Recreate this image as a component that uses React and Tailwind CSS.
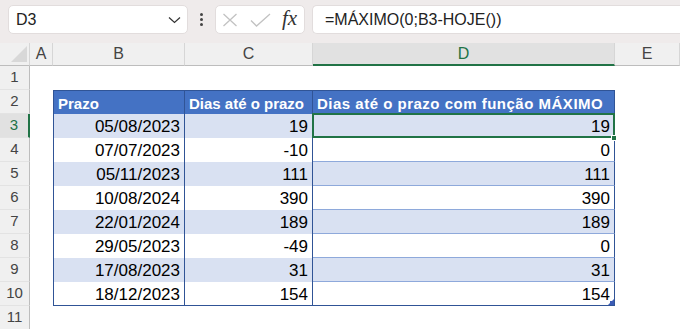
import React from 'react';

const rows = [
  ['05/08/2023', '19', '19'],
  ['07/07/2023', '-10', '0'],
  ['05/11/2023', '111', '111'],
  ['10/08/2024', '390', '390'],
  ['22/01/2024', '189', '189'],
  ['29/05/2023', '-49', '0'],
  ['17/08/2023', '31', '31'],
  ['18/12/2023', '154', '154'],
];

const TopBar = () => (
  <div className="h-[43px] bg-[#efebeb] flex items-start pt-[5px] pl-[8px]">
    {/* Name box */}
    <div className="w-[180px] h-[29px] bg-white rounded-[5px] border border-[#e2dddd] flex items-center justify-between pl-[7px] pr-[6px]">
      <span className="text-[16px] text-[#222]">D3</span>
      <svg width="13" height="8" viewBox="0 0 13 8">
        <path d="M1 1.5 L6.5 6.5 L12 1.5" fill="none" stroke="#333" strokeWidth="1.2" />
      </svg>
    </div>

    {/* vertical dots */}
    <div className="w-[27px] h-[29px] flex flex-col items-center justify-center gap-[2px]">
      <span className="w-[3px] h-[3px] bg-[#444] rounded-full" />
      <span className="w-[3px] h-[3px] bg-[#444] rounded-full" />
      <span className="w-[3px] h-[3px] bg-[#444] rounded-full" />
    </div>

    {/* cancel / enter / fx */}
    <div className="w-[90px] h-[29px] bg-white rounded-[5px] border border-[#e2dddd] flex items-center pl-[6px]">
      <svg width="16" height="14" viewBox="0 0 16 14">
        <path d="M1.5 1 L14.5 13 M14.5 1 L1.5 13" stroke="#c2c2c2" strokeWidth="1.3" fill="none" />
      </svg>
      <svg className="ml-[12px]" width="21" height="14" viewBox="0 0 21 14">
        <path d="M1 7.5 L6.5 13 L20 1" stroke="#c2c2c2" strokeWidth="1.3" fill="none" />
      </svg>
      <span className="ml-[11px] font-['Liberation_Serif',serif] italic text-[21px] leading-none text-[#333] -mt-[2px]">fx</span>
    </div>

    {/* formula */}
    <div className="ml-[7px] flex-1 h-[29px] bg-white rounded-l-[5px] border border-r-0 border-[#e2dddd] flex items-center pl-[12px] text-[16px] text-[#222]">
      =MÁXIMO(0;B3-HOJE())
    </div>
  </div>
);

const colHead = 'bg-[#f0f0f0] border-b border-b-[#bdbdbd] border-r border-r-[#d6d6d6] flex items-center justify-center text-[16px] leading-[22px] text-[#444]';
const rowHead = 'bg-[#f0f0f0] border-r border-r-[#bdbdbd] border-b border-b-[#e3e3e3] flex items-center justify-center text-[15px] text-[#444]';
const body = 'text-[17px] leading-[22px] pt-[2px] text-right pr-[4px] text-black whitespace-nowrap';
const head = 'bg-[#4472c4] text-white font-bold text-[15px] leading-[23px] pt-[1px] pl-[4px] whitespace-nowrap border-t border-t-[#305496] border-r border-r-[#305496]';

const Sheet = () => (
  <div className="grid grid-cols-[30px_23px_132px_128px_302px_1fr] grid-rows-[23px_repeat(11,24px)]">
    {/* column headers */}
    <div className="bg-[#f0f0f0] border-b border-b-[#bdbdbd] border-r border-r-[#d6d6d6] flex items-end justify-end pr-[2px] pb-[3px]">
      <svg width="16" height="16" viewBox="0 0 16 16">
        <polygon points="16,0 16,16 0,16" fill="#d8d8d8" />
      </svg>
    </div>
    <div className={colHead}>A</div>
    <div className={colHead}>B</div>
    <div className={colHead}>C</div>
    <div className="bg-[#e1e1e1] border-b-2 border-b-[#217346] border-r border-r-[#d6d6d6] flex items-center justify-center text-[16px] leading-[22px] text-[#217346]">D</div>
    <div className={colHead}>E</div>

    {/* row 1 */}
    <div className={rowHead}>1</div>
    <div />
    <div />
    <div />
    <div />
    <div />

    {/* row 2: table header */}
    <div className={rowHead}>2</div>
    <div />
    <div className={head + ' border-l border-l-[#305496]'}>Prazo</div>
    <div className={head}>Dias até o prazo</div>
    <div className={head + ' tracking-[0.5px]'}>Dias até o prazo com função MÁXIMO</div>
    <div />

    {rows.map((r, i) => {
      const n = i + 3;
      const band = i % 2 === 0 ? 'bg-[#d9e1f2]' : 'bg-white';
      const last = i === rows.length - 1;
      const bottom = last ? ' border-b border-b-[#305496]' : '';
      const selected = n === 3;
      return (
        <React.Fragment key={n}>
          {selected ? (
            <div className="bg-[#e1e1e1] border-r-2 border-r-[#217346] border-b border-b-[#e3e3e3] flex items-center justify-center text-[15px] text-[#217346]">{n}</div>
          ) : (
            <div className={rowHead}>{n}</div>
          )}
          <div />
          <div className={`${body} ${band} border-l border-l-[#305496] border-r border-r-[#305496]${bottom}`}>{r[0]}</div>
          <div className={`${body} ${band} border-r border-r-[#305496]${bottom}`}>{r[1]}</div>
          <div className={`${body} ${band} relative border-r border-r-[#305496] ${last ? 'border-b border-b-[#305496]' : 'border-b border-b-[#8ea9db]'}`}>
            {r[2]}
            {selected && (
              <>
                <div className="absolute -inset-[1px] border-2 border-[#217346] z-10 pointer-events-none" />
                <div className="absolute -right-[3px] -bottom-[4px] w-[6px] h-[6px] bg-[#217346] border border-white z-20" />
              </>
            )}
            {last && (
              <svg className="absolute right-0 bottom-0" width="6" height="6" viewBox="0 0 6 6">
                <polygon points="6,0 6,6 0,6" fill="#3a5bb5" />
                <rect x="2" y="2" width="4" height="4" fill="#3a5bb5" />
              </svg>
            )}
          </div>
          <div />
        </React.Fragment>
      );
    })}

    {/* row 11 */}
    <div className={rowHead}>11</div>
    <div />
    <div />
    <div />
    <div />
    <div />
  </div>
);

export default function App() {
  return (
    <div className="w-[680px] h-[329px] overflow-hidden bg-white font-['Liberation_Sans',Arial,sans-serif]">
      <TopBar />
      <Sheet />
    </div>
  );
}
